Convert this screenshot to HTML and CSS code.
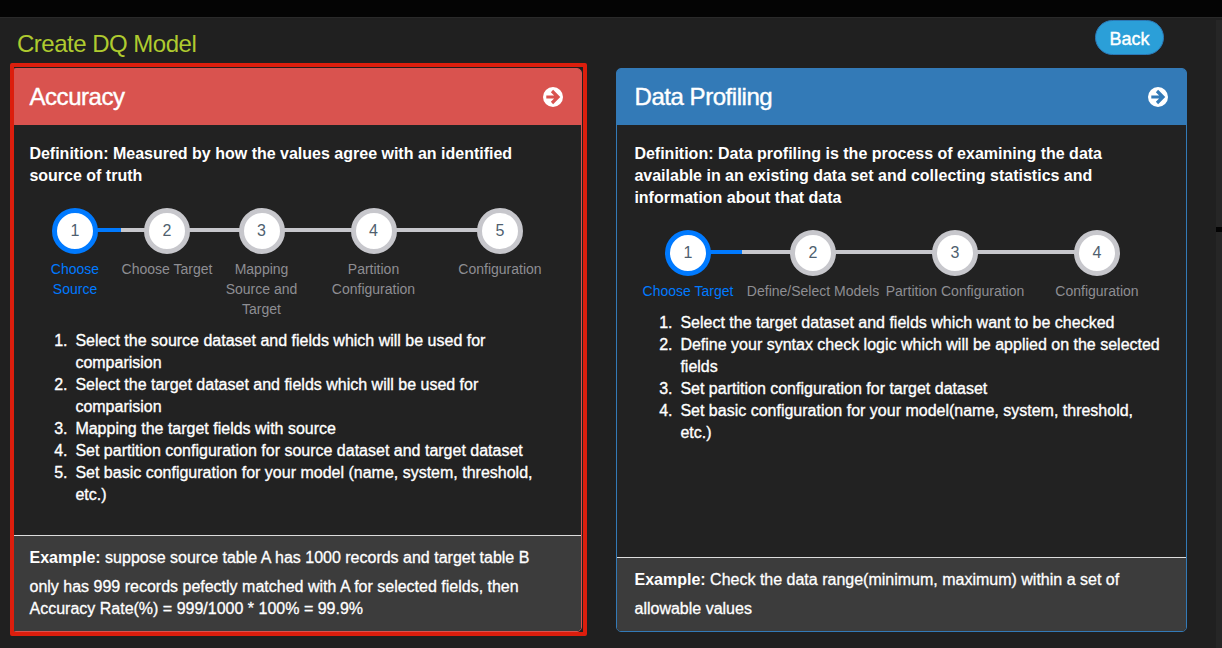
FILE: index.html
```html
<!DOCTYPE html>
<html lang="en">
<head>
<meta charset="utf-8">
<title>Create DQ Model</title>
<link rel="stylesheet" href="styles.css">
</head>
<body>
<div class="topbar"></div>
<div class="page">
<main class="content">
  <header class="page-head">
    <h1 class="page-title">Create DQ Model</h1>
    <button class="back">Back</button>
  </header>
  <div class="panels">
    <section class="panel panel-accuracy">
      <div class="panel-head">
        <h2>Accuracy</h2>
        <svg class="go" viewBox="0 0 20 20"><circle cx="10" cy="10" r="10"/><path d="M3.3 10H14.5M9 4L15 10L9 16"/></svg>
      </div>
      <div class="panel-body">
        <p class="definition">Definition: Measured by how the values agree with an identified source of truth</p>
        <div class="steps steps-five">
          <div class="step active"><span class="dot">1</span><span class="label">Choose<br>Source</span></div>
          <div class="step"><span class="dot">2</span><span class="label">Choose Target</span></div>
          <div class="step"><span class="dot">3</span><span class="label">Mapping<br>Source and<br>Target</span></div>
          <div class="step"><span class="dot">4</span><span class="label">Partition<br>Configuration</span></div>
          <div class="step"><span class="dot">5</span><span class="label">Configuration</span></div>
        </div>
        <ol class="list">
          <li>Select the source dataset and fields which will be used for<br>comparision</li>
          <li>Select the target dataset and fields which will be used for<br>comparision</li>
          <li>Mapping the target fields with source</li>
          <li>Set partition configuration for source dataset and target dataset</li>
          <li>Set basic configuration for your model (name, system, threshold,<br>etc.)</li>
        </ol>
      </div>
      <div class="panel-foot"><strong>Example:</strong> suppose source table A has 1000 records and target table B<br>only has 999 records pefectly matched with A for selected fields, then<br>Accuracy Rate(%) = 999/1000 * 100% = 99.9%</div>
      <div class="highlight"></div>
    </section>
    <section class="panel panel-profiling">
      <div class="panel-head">
        <h2>Data Profiling</h2>
        <svg class="go" viewBox="0 0 20 20"><circle cx="10" cy="10" r="10"/><path d="M3.3 10H14.5M9 4L15 10L9 16"/></svg>
      </div>
      <div class="panel-body">
        <p class="definition">Definition: Data profiling is the process of examining the data<br>available in an existing data set and collecting statistics and<br>information about that data</p>
        <div class="steps steps-four">
          <div class="step active"><span class="dot">1</span><span class="label">Choose Target</span></div>
          <div class="step"><span class="dot">2</span><span class="label">Define/Select Models</span></div>
          <div class="step"><span class="dot">3</span><span class="label">Partition Configuration</span></div>
          <div class="step"><span class="dot">4</span><span class="label">Configuration</span></div>
        </div>
        <ol class="list">
          <li>Select the target dataset and fields which want to be checked</li>
          <li>Define your syntax check logic which will be applied on the selected<br>fields</li>
          <li>Set partition configuration for target dataset</li>
          <li>Set basic configuration for your model(name, system, threshold,<br>etc.)</li>
        </ol>
      </div>
      <div class="panel-foot"><strong>Example:</strong> Check the data range(minimum, maximum) within a set of<br>allowable values</div>
    </section>
  </div>
</main>
<aside class="side"><div class="side-gap"></div></aside>
</div>
</body>
</html>
```
FILE: styles.css
```css
* { box-sizing: border-box; }
body {
  margin: 0;
  height: 648px;
  overflow: hidden;
  display: flex;
  flex-direction: column;
  background: #202020;
  color: #fff;
  font: 16px/22px "Liberation Sans", Arial, sans-serif;
}
.topbar { height: 17px; background: #040404; }
.page { flex: 1; display: flex; border-top: 1px solid #2a2a2a; }
.content { flex: 1; padding-left: 11px; }
.page-head {
  height: 50px;
  padding: 2px 52px 0 6px;
  display: flex;
  justify-content: space-between;
  align-items: flex-start;
}
.page-title {
  margin: 9px 0 0;
  color: #afcb2f;
  font-size: 24px;
  line-height: 30px;
  font-weight: 400;
  letter-spacing: -.5px;
}
.back {
  width: 69px;
  height: 35px;
  padding: 2px 0 0;
  border: 1px solid #2b78b5;
  border-radius: 18px;
  background: #2b9fd8;
  color: #fff;
  font: 18px/30px "Liberation Sans", Arial, sans-serif;
  -webkit-text-stroke: .4px;
}
.panels { display: flex; gap: 34px; }
.panel {
  position: relative;
  width: 571px;
  height: 564px;
  display: flex;
  flex-direction: column;
  border: 1px solid var(--tone);
  border-radius: 5px;
  background: #222;
}
.panel-accuracy { --tone: #d9534f; }
.panel-profiling { --tone: #337ab7; }
.panel-head {
  height: 56px;
  padding: 0 18px 0 17.5px;
  display: flex;
  align-items: center;
  justify-content: space-between;
  background: var(--tone);
  border-radius: 3px 3px 0 0;
}
.panel-head h2 {
  margin: 0 0 1px;
  font-size: 24px;
  line-height: 30px;
  font-weight: 400;
  letter-spacing: -.45px;
  -webkit-text-stroke: .4px;
}
.go { width: 20px; height: 20px; fill: #fff; }
.go path { fill: none; stroke: var(--tone); stroke-width: 3.2; }
.panel-body { padding: 18px 18px 0 17px; }
.definition { margin: 0 0 21px; padding-left: .4px; font-weight: 700; }
.steps { display: grid; margin-bottom: 11px; }
.steps-five { grid-template-columns: 92px 92px 97px 127px 126px; }
.steps-four { grid-template-columns: 108px 142px 142px 142px; }
.step {
  position: relative;
  display: flex;
  flex-direction: column;
  align-items: center;
  gap: 5px;
  color: #8e8e93;
}
.step::before {
  content: "";
  position: absolute;
  top: 20px;
  left: 0;
  width: 100%;
  height: 4px;
  background: #c7c7cc;
}
.step:last-child::before { width: 50%; }
.step.active { color: #007aff; }
.step.active::before { left: 50%; width: 50%; background: #007aff; }
.dot {
  position: relative;
  width: 46px;
  height: 46px;
  border: 5px solid #c7c7cc;
  border-radius: 50%;
  background: #fff;
  color: #4f5f6f;
  line-height: 35px;
  text-align: center;
}
.active .dot { border-color: #007aff; }
.label { font-size: 14px; line-height: 20px; text-align: center; white-space: nowrap; }
.list { margin: 0; padding-left: 43px; -webkit-text-stroke: .35px; white-space: nowrap; }
.list li { padding-left: 3.4px; }
.panel-foot {
  margin-top: auto;
  padding: 4px 17px 11px 17.5px;
  border-top: 1px solid #ddd;
  border-radius: 0 0 4px 4px;
  background: #3c3c3c;
  white-space: nowrap;
  -webkit-text-stroke: .3px;
}
.panel-foot strong { line-height: 36px; -webkit-text-stroke: 0; }
.highlight {
  position: absolute;
  inset: -6px -6px -5px -2px;
  border: 4px solid #dc1e0d;
  border-radius: 2px;
}
.side { width: 6px; margin-top: 2px; background: #262626; }
.side-gap { margin-top: 207px; height: 5px; background: #040404; }
```
